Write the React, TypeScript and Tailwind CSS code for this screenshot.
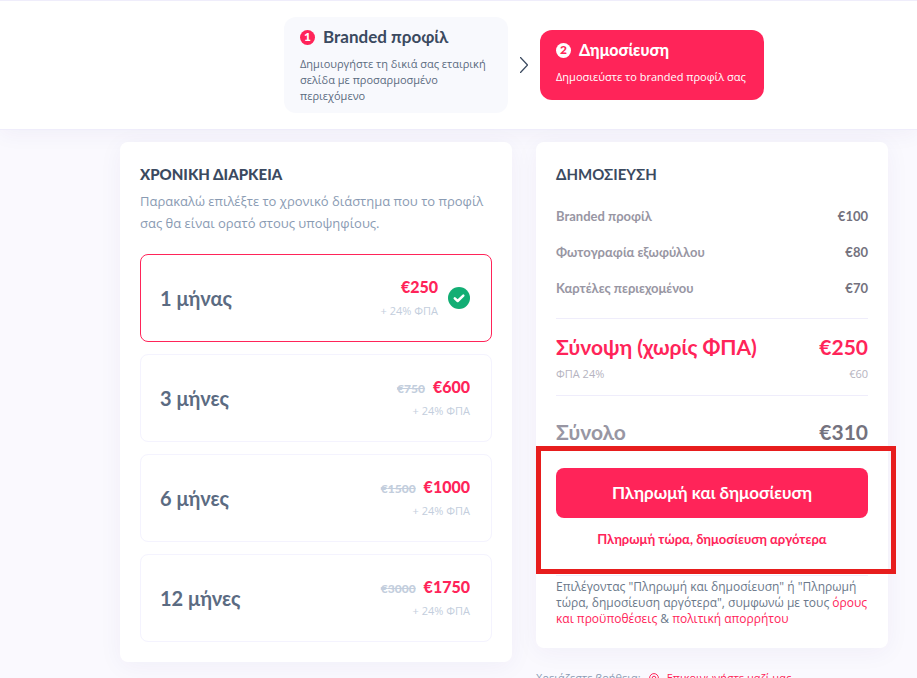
import React, { useState } from 'react';
import clsx from 'clsx';

interface Plan {
  id: string;
  label: string;
  price: number;
  oldPrice?: number;
}

interface StepProps {
  number: number;
  title: string;
  description: string;
  active?: boolean;
}

const plans: Plan[] = [
  { id: '1', label: '1 μήνας', price: 250 },
  { id: '3', label: '3 μήνες', price: 600, oldPrice: 750 },
  { id: '6', label: '6 μήνες', price: 1000, oldPrice: 1500 },
  { id: '12', label: '12 μήνες', price: 1750, oldPrice: 3000 },
];

const items = [
  { label: 'Branded προφίλ', price: 100 },
  { label: 'Φωτογραφία εξωφύλλου', price: 80 },
  { label: 'Καρτέλες περιεχομένου', price: 70 },
];

const Step: React.FC<StepProps> = ({ number, title, description, active }) => (
  <li className={clsx('w-56 min-h-[70px] rounded-xl px-4 pt-2 pb-[9px]', active ? 'bg-[#ff2459] text-white' : 'bg-[#f8f9fd] text-[#5b6b7f]')}>
    <div className="flex items-center gap-2">
      <span className={clsx('flex size-[15px] items-center justify-center rounded-full text-xs font-black leading-none', active ? 'bg-white text-[#ff2459]' : 'bg-[#ff2459] text-white')}>
        {number}
      </span>
      <h2 className={clsx('leading-6', active ? 'text-base font-black' : 'text-[17px] font-bold text-[#3b4a60]')}>{title}</h2>
    </div>
    <p className="mt-[7px] font-['Open_Sans',sans-serif] text-[11px] leading-4">{description}</p>
  </li>
);

const CheckIcon = () => (
  <svg viewBox="0 0 22 22" className="size-[22px]" aria-hidden="true">
    <circle cx="11" cy="11" r="11" fill="#12ae74" />
    <path d="M6.8 11.3l2.9 2.7 5.6-5.4" fill="none" stroke="#fff" strokeWidth="2.5" strokeLinecap="round" strokeLinejoin="round" />
  </svg>
);

const PlanOption: React.FC<{ plan: Plan; selected: boolean; onSelect: () => void }> = ({ plan, selected, onSelect }) => (
  <label className={clsx('relative flex h-[88px] cursor-pointer items-center rounded-lg border pr-[21px] pl-[19px]', selected ? 'border-[#ff2459]' : 'border-[#f4f3fe]')}>
    <input type="radio" name="plan" value={plan.id} checked={selected} onChange={onSelect} className="sr-only" />
    <span className="flex-1 text-xl font-bold text-[#5b6b82]">{plan.label}</span>
    <span className="flex flex-col items-end pt-0.5">
      <span className="flex items-baseline gap-2 leading-6">
        {plan.oldPrice && <del className="text-xs font-black text-[#c3cedd]">€{plan.oldPrice}</del>}
        <span className="text-base font-black text-[#ff2459]">€{plan.price}</span>
      </span>
      <span className="font-['Open_Sans',sans-serif] text-[11px] leading-6 text-[#c3cedd]">+ 24% ΦΠΑ</span>
    </span>
    {selected && <span className="ml-2.5"><CheckIcon /></span>}
  </label>
);

export default function App() {
  const [selectedPlan, setSelectedPlan] = useState('1');

  return (
    <div className="h-screen min-h-[678px] overflow-hidden bg-[#faf9fe] font-['Lato',sans-serif]">
      <header className="border-y border-[#efedfb] bg-white py-4 shadow-[0_4px_20px_rgba(60,40,140,0.05)]">
        <ol className="flex items-center gap-3 pl-[284px]">
          <Step number={1} title="Branded προφίλ" description="Δημιουργήστε τη δικιά σας εταιρική σελίδα με προσαρμοσμένο περιεχόμενο" />
          <li aria-hidden="true">
            <svg viewBox="0 0 8 16" className="h-4 w-2" fill="none" stroke="#3b4a60" strokeLinecap="round" strokeLinejoin="round">
              <path d="M0.5 0.5L7.5 8L0.5 15.5" strokeWidth="1.2" />
            </svg>
          </li>
          <Step number={2} title="Δημοσίευση" description="Δημοσιεύστε το branded προφίλ σας" active />
        </ol>
      </header>

      <main className="mt-3 grid grid-cols-[392fr_352fr] items-start gap-6 pr-[29px] pl-[120px]">
        <section className="rounded-lg bg-white p-5 shadow-[0_4px_24px_rgba(60,40,140,0.05)]">
          <h2 className="text-[15px] leading-6 font-black text-[#3b4a60]">ΧΡΟΝΙΚΗ ΔΙΑΡΚΕΙΑ</h2>
          <p className="mt-1 font-['Open_Sans',sans-serif] text-[13px] leading-[22px] text-[#8a9bb3]">
            Παρακαλώ επιλέξτε το χρονικό διάστημα που το προφίλ σας θα είναι ορατό στους υποψηφίους.
          </p>
          <div className="mt-5 flex flex-col gap-3">
            {plans.map(plan => (
              <PlanOption key={plan.id} plan={plan} selected={plan.id === selectedPlan} onSelect={() => setSelectedPlan(plan.id)} />
            ))}
          </div>
        </section>

        <div>
          <section className="rounded-lg bg-white p-5 shadow-[0_4px_24px_rgba(60,40,140,0.05)]">
            <h2 className="text-[15px] leading-6 font-bold text-[#3b4a60]">ΔΗΜΟΣΙΕΥΣΗ</h2>
            <dl className="mt-5 flex flex-col gap-4 border-b border-[#efedfb] pb-5 text-[13px] leading-5 font-bold">
              {items.map(item => (
                <div key={item.label} className="flex justify-between">
                  <dt className="text-[#9896a3]">{item.label}</dt>
                  <dd className="text-[#74727e]">€{item.price}</dd>
                </div>
              ))}
            </dl>
            <dl className="border-b border-[#efedfb] pt-3.5 pb-3">
              <div className="flex justify-between text-[21px] leading-7 font-bold text-[#ff2459]">
                <dt>Σύνοψη (χωρίς ΦΠΑ)</dt>
                <dd>€250</dd>
              </div>
              <div className="mt-1 flex justify-between font-['Open_Sans',sans-serif] text-[11px] leading-[18px] text-[#b5b3c0]">
                <dt>ΦΠΑ 24%</dt>
                <dd>€60</dd>
              </div>
            </dl>
            <dl className="flex justify-between pt-6 text-[21px] leading-6 font-bold">
              <dt className="text-[#9896a3]">Σύνολο</dt>
              <dd className="text-[#74727e]">€310</dd>
            </dl>
            <div className="relative mt-6 border-b border-[#efedfb] pb-[25px]">
              <button type="button" className="h-[50px] w-full rounded-lg bg-[#ff2459] text-[17px] font-bold text-white">
                Πληρωμή και δημοσίευση
              </button>
              <button type="button" className="mt-2.5 w-full text-center text-[13px] leading-[22px] font-bold text-[#ff2459]">
                Πληρωμή τώρα, δημοσίευση αργότερα
              </button>
              <div className="pointer-events-none absolute -top-[22px] -right-7 bottom-px -left-5 border-5 border-[#e71d1d]" />
            </div>
            <p className="mt-[3px] mb-px font-['Open_Sans',sans-serif] text-xs leading-4 text-[#6b788a]">
              Επιλέγοντας "Πληρωμή και δημοσίευση" ή "Πληρωμή τώρα, δημοσίευση αργότερα", συμφωνώ με τους{' '}
              <a href="#terms" className="text-[#ff2459]">όρους και προϋποθέσεις</a> &amp;{' '}
              <a href="#privacy" className="text-[#ff2459]">πολιτική απορρήτου</a>
            </p>
          </section>
          <p className="mt-[18px] flex items-center gap-2 font-['Open_Sans',sans-serif] text-[11px] leading-6 text-[#8a9bb3]">
            Χρειάζεστε βοήθεια;
            <svg viewBox="0 0 10 10" className="size-2.5" fill="none" stroke="#ff2459" aria-hidden="true">
              <circle cx="5" cy="5" r="4.4" />
              <circle cx="5" cy="5" r="1.8" />
            </svg>
            <a href="#contact" className="text-[#ff2459]">Επικοινωνήστε μαζί μας</a>
          </p>
        </div>
      </main>
    </div>
  );
}
